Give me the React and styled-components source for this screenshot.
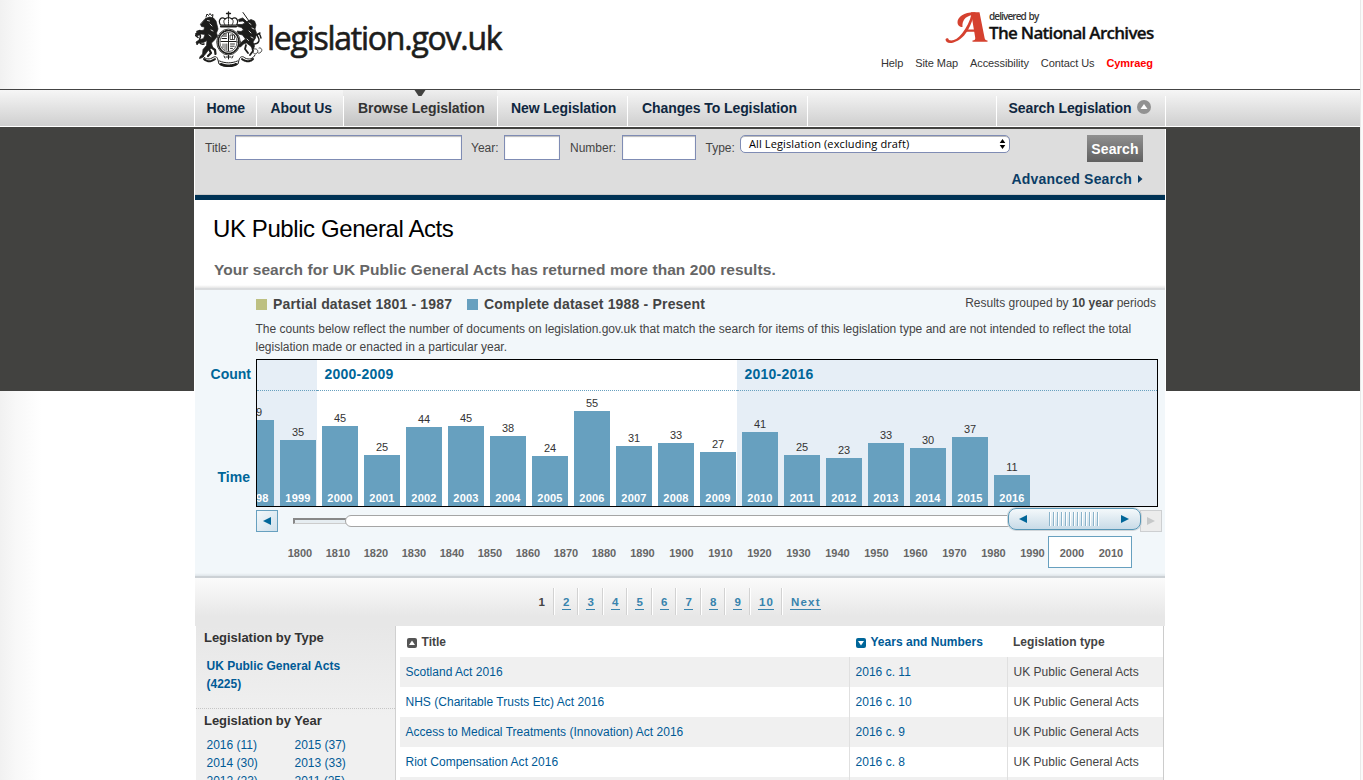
import React from "react";
import styled, { createGlobalStyle } from "styled-components";

const GlobalStyle = createGlobalStyle`
  *, *::before, *::after { box-sizing: border-box; }
  html, body { margin: 0; padding: 0; }
  body {
    width: 1363px; height: 780px; overflow: hidden; background: #fff;
    font-family: "Liberation Sans", Arial, sans-serif; font-size: 12px; color: #444;
  }
`;

const Page = styled.div`
  position: relative;
  width: 1363px;
  height: 780px;
  overflow: hidden;
  background:
    linear-gradient(#424240, #424240) 0 127px / 1360px 264px no-repeat,
    linear-gradient(90deg, #f1f1f1, #f8f8f8 16px, #fff 42px);
`;

const EdgeStrip = styled.div`
  position: absolute;
  top: 0;
  right: 0;
  width: 3px;
  height: 780px;
  background: #fafafa;
  border-left: 1px solid #e9e9e9;
`;

const Header = styled.header`
  display: flex;
  justify-content: space-between;
  width: 970px;
  height: 89px;
  margin: 0 auto 0 195px;
`;

const Brand = styled.div`
  display: flex;
  align-items: flex-start;
  padding-top: 11px;
`;

const BrandName = styled.span`
  margin: 7px 0 0 4px;
  font: 400 32px/40px "Open Sans", "Noto Sans", sans-serif;
  letter-spacing: -1.25px;
  color: #1d1d1b;
  -webkit-text-stroke: 0.6px #1d1d1b;
  white-space: nowrap;
`;

const HeaderSide = styled.div`
  display: flex;
  flex-direction: column;
  align-items: flex-end;
  padding: 11px 11px 0 0;
`;

const Archives = styled.div`
  display: flex;
  height: 34px;
`;

const ArchivesText = styled.div`
  display: flex;
  flex-direction: column;
  width: 165px;
  margin-left: 1px;
  font-family: "Open Sans", "Noto Sans", sans-serif;
  white-space: nowrap;
`;

const DeliveredBy = styled.span`
  font-size: 10px;
  font-weight: 600;
  line-height: 11px;
  letter-spacing: -0.9px;
  word-spacing: 1px;
  color: #333;
`;

const ArchivesName = styled.span`
  font-size: 17px;
  font-weight: 600;
  line-height: 21px;
  letter-spacing: -0.7px;
  color: #111;
  -webkit-text-stroke: 0.3px #111;
`;

const UtilityLinks = styled.nav`
  display: flex;
  gap: 12px;
  padding: 12px 1px 0 0;
  font-size: 11px;
  line-height: 13px;
  letter-spacing: -0.08px;
  color: #333;
`;

const Cymraeg = styled.b`
  color: #f00;
`;

const NavBar = styled.nav`
  position: relative;
  z-index: 1;
  display: flex;
  width: 1360px;
  height: 38px;
  padding: 0 194px;
  border-top: 1px solid #444;
  border-bottom: 1px solid #fff;
  background: linear-gradient(#f6f6f6, #cfcfcf);
  box-shadow: 0 2px 0 #424240;
`;

const NavItem = styled.a`
  position: relative;
  width: ${(p) => p.$w}px;
  margin-left: ${(p) => (p.$push ? "auto" : 0)};
  padding-left: ${(p) => p.$pad || 12.5}px;
  font-size: 14px;
  font-weight: bold;
  line-height: 36px;
  letter-spacing: -0.09px;
  color: ${(p) => (p.$active ? "#333" : "#0f2740")};
  white-space: nowrap;
  background: ${(p) => (p.$active ? "linear-gradient(#efefef, #c2c2c2)" : "none")};
  &::before {
    content: "";
    position: absolute;
    left: 0;
    top: 6px;
    bottom: 0;
    width: 1px;
    background: #fff;
  }
`;

const NavEnd = styled.span`
  width: 1px;
  margin-top: 6px;
  background: #fff;
`;

const NavPointer = styled.svg`
  position: absolute;
  top: 0;
  left: 71px;
`;

const SearchIcon = styled.svg`
  margin-left: 6px;
  vertical-align: -1px;
`;

const Main = styled.main`
  width: 972px;
  margin-left: 194px;
  border: solid #fff;
  border-width: 0 1px;
  background: #fff;
`;

const SearchPanel = styled.form`
  height: 68px;
  border-bottom: 1px solid #c9c9c9;
  padding: 8px 22px 0 10px;
  background: #ddd;
`;

const SearchRow = styled.div`
  display: flex;
  align-items: flex-start;
`;

const FieldLabel = styled.label`
  width: ${(p) => p.$w}px;
  padding-top: 6px;
  padding-left: ${(p) => p.$pad || 0}px;
  line-height: 15px;
  color: #444;
  white-space: nowrap;
`;

const TextField = styled.input`
  width: ${(p) => p.$w}px;
  height: 25px;
  border: 1px solid #7f8cb4;
  border-radius: 0;
  background: #fff;
  box-shadow: inset 0 1px 1px #bbb;
`;

const TypeSelect = styled.div`
  display: flex;
  justify-content: space-between;
  align-items: center;
  width: 270px;
  height: 18px;
  padding: 0 3px 0 8px;
  border: 1px solid #7f8cb4;
  border-radius: 5px;
  background: #fff;
  box-shadow: inset 0 1px 0 #bbb;
  font: 11px/16px "Open Sans", "Noto Sans", sans-serif;
  letter-spacing: 0.12px;
  color: #000;
`;

const SearchButton = styled.button`
  width: 56px;
  height: 27px;
  margin-left: auto;
  padding: 0;
  border: 0;
  background: linear-gradient(#909090, #606060);
  font: bold 14px/28px "Liberation Sans", Arial, sans-serif;
  letter-spacing: 0.1px;
  color: #fff;
`;

const AdvancedSearch = styled.a`
  display: flex;
  justify-content: flex-end;
  align-items: center;
  gap: 6px;
  margin-top: 9px;
  font-size: 14px;
  font-weight: bold;
  line-height: 16px;
  letter-spacing: 0.2px;
  color: #0b3d66;
`;

const Heading = styled.section`
  height: 93px;
  padding: 15px 0 0 18px;
  border-top: 5px solid #003355;
  background: linear-gradient(#fff, #e6e6e6) 0 100% / 100% 3px no-repeat;
`;

const PageTitle = styled.h1`
  margin: 0;
  font-size: 24px;
  font-weight: normal;
  line-height: 28px;
  letter-spacing: -0.41px;
  color: #000;
`;

const ResultCount = styled.h2`
  margin: 17px 0 0 1px;
  font-size: 15.5px;
  line-height: 19px;
  letter-spacing: 0.06px;
  color: #666;
`;

const Timeline = styled.section`
  height: 290px;
  padding-top: 6px;
  border-top: 2px solid #dadcde;
  border-bottom: 2px solid #ccd1d5;
  background: linear-gradient(#f2f7fa, #dfe5e9) 0 100% / 100% 3px no-repeat, #f2f7fa;
`;

const LegendRow = styled.div`
  display: flex;
  align-items: center;
  height: 16px;
  padding: 0 9px 0 61px;
  white-space: nowrap;
`;

const LegendItem = styled.div`
  display: flex;
  align-items: center;
  gap: 6px;
  width: ${(p) => p.$w}px;
  font-size: 14px;
  font-weight: bold;
  letter-spacing: 0.18px;
  color: #444;
`;

const Swatch = styled.span`
  width: 11px;
  height: 11px;
  background: ${(p) => p.$color};
`;

const GroupNote = styled.span`
  margin: -2px 0 0 auto;
  color: #444;
`;

const Explanation = styled.p`
  width: 895px;
  margin: 8px 0 3px 60.5px;
  line-height: 18px;
  color: #444;
`;

const ChartRow = styled.div`
  display: flex;
`;

const AxisLabels = styled.div`
  display: flex;
  flex-direction: column;
  align-items: flex-end;
  justify-content: space-between;
  width: 61px;
  height: 148px;
  padding: 6px 5px 21px 0;
  font-size: 14px;
  font-weight: bold;
  line-height: 18px;
  color: #069;
`;

const TimeLabel = styled.span`
  margin-right: 1px;
`;

const ChartFrame = styled.div`
  display: flex;
  width: 902px;
  height: 148px;
  border: 1px solid #000;
  background: #e6eef6;
  overflow: hidden;
`;

const Decade = styled.div`
  display: flex;
  flex-direction: column;
  align-items: ${(p) => (p.$end ? "flex-end" : "stretch")};
  width: ${(p) => p.$w}px;
  background: ${(p) => (p.$shaded ? "#e6eef6" : "#fff")};
  overflow: hidden;
`;

const DecadeLabel = styled.div`
  flex: none;
  align-self: stretch;
  height: 31px;
  padding-left: 7.5px;
  border-bottom: 1px dotted #67a0bf;
  font-size: 14px;
  font-weight: bold;
  line-height: 28px;
  letter-spacing: 0.22px;
  color: #069;
`;

const Bars = styled.div`
  display: flex;
  align-items: flex-end;
  gap: 6px;
  flex: 1;
  padding: 0 1px 0 5px;
`;

const BarColumn = styled.div`
  flex: none;
  display: flex;
  flex-direction: column;
  width: 36px;
  font-size: 11px;
  line-height: 14px;
  text-align: center;
  color: #333;
`;

const Bar = styled.div`
  display: flex;
  align-items: flex-end;
  justify-content: center;
  margin-top: 1px;
  padding-bottom: 1px;
  background: #67a0bf;
  font-weight: bold;
  letter-spacing: 0.2px;
  color: #fff;
`;

const SliderRow = styled.div`
  display: flex;
  height: 27px;
  padding: 1px 0 0 61px;
`;

const StepButton = styled.span`
  display: flex;
  align-items: center;
  justify-content: center;
  width: 22px;
  height: 22px;
  margin-top: 2px;
  margin-left: ${(p) => (p.$disabled ? "-1px" : 0)};
  border: ${(p) => (p.$disabled ? "1px solid #cdcfd1" : "1px solid #67a0bf")};
  background: ${(p) => (p.$disabled ? "#ececec" : "linear-gradient(135deg, #f2f7fa, #cfe0eb)")};
`;

const Track = styled.span`
  width: 53px;
  height: 6px;
  margin: 10px 0 0 15px;
  border: solid #888;
  border-width: 2px 0 1px 2px;
  border-bottom-color: #ccc;
  background: #e6edf1;
`;

const Range = styled.span`
  width: 668px;
  height: 12px;
  margin: 7px 0 0 -1px;
  border: 1px solid #a5a5a5;
  border-radius: 6px;
  background: #fff;
`;

const Handle = styled.span`
  z-index: 1;
  display: flex;
  align-items: center;
  justify-content: space-between;
  width: 133px;
  height: 22px;
  margin-left: -5px;
  padding: 0 10px 0 9px;
  border: 1px solid #5696b6;
  border-radius: 8px;
  background: linear-gradient(#f4f9fb, #c8dbe7);
  box-shadow: 0 0 0 1px #cfd5d9;
`;

const Grip = styled.span`
  width: 50px;
  height: 14px;
  margin: -1px 0 0;
  background: repeating-linear-gradient(90deg, #8ab3ca 0 1px, #fff 1px 2px, transparent 2px 4px);
`;

const Years = styled.div`
  display: flex;
  height: 32px;
  margin-top: 2px;
  padding-left: 86px;
  font-size: 11px;
  font-weight: bold;
  line-height: 34px;
  text-align: center;
  color: #666;
`;

const YearMark = styled.span`
  width: ${(p) => p.$w}px;
`;

const SelectedYears = styled.span`
  display: flex;
  width: 84px;
  margin-left: -4px;
  padding-left: 3.5px;
  border: 1px solid #67a0bf;
  line-height: 32px;
  background: #fff;
`;

const Pagination = styled.nav`
  display: flex;
  justify-content: center;
  height: 48px;
  padding: 10px 2px 0 0;
  background: linear-gradient(#fbfbfb, #e7e7e7 80%);
`;

const PageStep = styled.span`
  height: 27px;
  padding: 7px 6.9px 0 8px;
  border-left: ${(p) => (p.$first ? 0 : "1px solid #d2d2d2")};
  box-shadow: ${(p) => (p.$first ? "none" : "inset 1px 0 #fff")};
  font-size: 11.5px;
  font-weight: bold;
  line-height: 14px;
  letter-spacing: 1.2px;
  color: #444;
`;

const PageLink = styled.a`
  display: block;
  padding-left: 1px;
  border-bottom: 1px solid #3883ad;
  color: #3883ad;
`;

const Results = styled.section`
  display: flex;
  height: 154px;
  padding: 0 1px;
  overflow: hidden;
`;

const Sidebar = styled.aside`
  width: 200px;
  border-right: 1px solid #d0d0d0;
  background: linear-gradient(#e7e7e7, #f0f0f0 90px);
`;

const FacetTitle = styled.h3`
  margin: 0;
  font-size: 13px;
  line-height: 16px;
  letter-spacing: -0.03px;
  color: #333;
`;

const FacetByType = styled.div`
  height: 83px;
  padding: 4px 0 0 8px;
  border-bottom: 1px dotted #c5c5c5;
`;

const FacetByYear = styled.div`
  padding: 4px 0 0 8px;
`;

const TypeLink = styled.a`
  display: block;
  width: 150px;
  margin: 11px 0 0 2.5px;
  font-weight: bold;
  line-height: 18px;
  color: #005a96;
`;

const YearLinks = styled.div`
  display: grid;
  grid-template-columns: 88px 88px;
  margin: 7px 0 0 2.5px;
  line-height: 18px;
  color: #005a96;
`;

const Table = styled.div`
  width: 764px;
  margin-left: 4px;
  border-right: 1px solid #ccc;
`;

const Row = styled.div`
  display: grid;
  grid-template-columns: 449px 158px 156px;
  height: ${(p) => (p.$head ? 31 : 30)}px;
  line-height: ${(p) => (p.$head ? 32 : 30)}px;
  font-weight: ${(p) => (p.$head ? "bold" : "normal")};
  background: ${(p) => (p.$shaded ? "#f0f0f0" : "#fff")};
`;

const Cell = styled.div`
  display: flex;
  align-items: center;
  padding-left: ${(p) => p.$pad || 5.5}px;
  border-left: ${(p) => (p.$line ? "1px solid #e0e0e0" : 0)};
  color: ${(p) => (p.$link ? "#005a96" : "#444")};
  letter-spacing: 0.02px;
  white-space: nowrap;
`;

const SortMark = styled.svg`
  margin: 2px 4.5px 0 0;
`;

const decades = [
  { w: 60, end: true, shaded: true, label: "", bars: [[1998, 49, 86], [1999, 35, 66]] },
  {
    w: 420, label: "2000-2009",
    bars: [[2000, 45, 80], [2001, 25, 51], [2002, 44, 79], [2003, 45, 80], [2004, 38, 70],
      [2005, 24, 50], [2006, 55, 95], [2007, 31, 60], [2008, 33, 63], [2009, 27, 54]],
  },
  {
    w: 420, shaded: true, label: "2010-2016",
    bars: [[2010, 41, 74], [2011, 25, 51], [2012, 23, 48], [2013, 33, 63], [2014, 30, 58],
      [2015, 37, 69], [2016, 11, 31]],
  },
];

const yearMarks = Array.from({ length: 20 }, (_, i) => 1800 + i * 10);

const acts = [
  ["Scotland Act 2016", "2016 c. 11"],
  ["NHS (Charitable Trusts Etc) Act 2016", "2016 c. 10"],
  ["Access to Medical Treatments (Innovation) Act 2016", "2016 c. 9"],
  ["Riot Compensation Act 2016", "2016 c. 8"],
  ["", ""],
];

const Arrow = ({ left, color = "#069" }) => (
  <svg width="10" height="10" viewBox="0 0 10 10">
    <path d={left ? "M9 1v8L1 5z" : "M1 1v8l8-4z"} fill={color} />
  </svg>
);

const Crest = () => (
  <svg width="68" height="57" viewBox="0 0 68 57" fill="none" stroke="#1d1d1b" strokeLinecap="round" strokeLinejoin="round">
    {/* crown */}
    <path d="M33.500 1v5M31.500 2.500h4" strokeWidth="1.300" />
    <path d="M25.500 14c-3-5 1-9 4.500-6 2-2 5-2 7 0 3.500-3 7.500 1 4.500 6z" strokeWidth="1.200" />
    <path d="M30 8c-2 2-1 4 0 6M37 8c2 2 1 4 0 6M33.500 7v7" strokeWidth=".9" strokeDasharray="1.200 .8" />
    <path d="M26 15.500h15" strokeWidth="2.200" strokeDasharray="2 .6" />
    {/* garter and shield */}
    <ellipse cx="33.500" cy="31" rx="11.800" ry="13" strokeWidth=".8" />
    <ellipse cx="33.500" cy="31" rx="10.300" ry="11.500" strokeWidth="1.700" strokeDasharray=".9 1" />
    <ellipse cx="33.500" cy="31" rx="8.600" ry="9.600" strokeWidth=".7" />
    <path d="M33.500 22v18M26 30.500h15" strokeWidth="1" />
    <path d="M27.500 25h4M27 27.500h4.500M28.500 23h3" strokeWidth="1" />
    <path d="M35.500 24h4v4.500h-4zM37.500 24v4" strokeWidth=".8" />
    <path d="M28 33v4M30 33v5.500M31.800 33v6" strokeWidth=".8" />
    <path d="M35.500 33h4M35.500 35.200h3.700M35.500 37.400h2" strokeWidth=".9" />
    {/* lion */}
    <path d="M11 6l1-3 1.500 1.500L15 2.500l1.500 2L18 3.500l-.5 3" strokeWidth="1" />
    <path d="M10.500 7.500l4-1.500 4 1 2.500 3 1 4 1 4-1.500 4 1 3-3 4-3 3 1 4-4 3-3 4-3 3.500-3 1 .5-2 2.500-2 .5-5 3.500-4 .5-5-3.500 2-5 .5-1.500 2-1-3 3-2 4.500-1.500 1.500-4-4-.5-4 2-1.500-2.500 3.500-2.500 5-1 .5-3-3-.5-1-2z" fill="#1d1d1b" strokeWidth=".7" />
    <path d="M12.500 9.500l2 .5M15 13l2 2M16 19l2 1M14 24l2 1.500" stroke="#fff" strokeWidth=".8" />
    <path d="M16 36l4 3 .5 4M14 38l2 4-3 3" strokeWidth="2.200" />
    <path d="M9 33c-5 1-5-3-4-6 1-2 0-5-3-4.500M2 22.500l-1.500 2 2.500 2M5 19.500l-3 1" strokeWidth="1.500" />
    {/* unicorn */}
    <path d="M54 10l-6-8.500" strokeWidth="1" />
    <path d="M52 10.500l4-2 3.500 1.500 1.500 4-1 4 1.500 4-1 5-2.500 4 1.500 4-1 3-3-3-4-3-3 1-3 3-2-1 3-4 4-3-3-4-4-1-1.500-3 4 .5 2.500-1.500-2-2.500-4-1-.5-2 5 0 3-1.500-2-2-4 .5-.5-2 4-1.500z" fill="#1d1d1b" strokeWidth=".7" />
    <path d="M54 12l2 1.500M57 17l2 1M54 20l2 2M56 26l2 1M52 28l1.500 1.500" stroke="#fff" strokeWidth=".8" />
    <path d="M51 34l-1 4 3 4M57 35l1 5-3 4" strokeWidth="1.800" />
    <path d="M59 33c5 0 6-4 4-7-2-3 1-4 2-2l1 3M61 24l4-2" strokeWidth="1.400" />
    <path d="M59 38c3-1 5 2 3 4s-5 0-4-2M64 37c2-1 4 2 2 4s-3 1-3 1" strokeWidth=".8" />
    {/* motto ribbon */}
    <path d="M7 44c3 4 6 5 10 3 3-2 5-2 6 2l1 4c6 3 13 3 19 0l1-4c1-4 4-4 6-2 4 2 8 1 10-3" strokeWidth="1" />
    <path d="M9 48c3 3 7 3 11 0M47 48c4 3 8 3 11 0" strokeWidth="2" strokeDasharray="1.300 1" />
    <path d="M24.500 50c6 2.500 12 2.500 18 0" strokeWidth="1" />
    <path d="M26 53.300c5 2 10 2 15 0" strokeWidth="2.600" strokeDasharray="1.700 .8" />
    <path d="M33.500 44v4M31 46h5M29 45l1 2M38 45l-1 2" strokeWidth="1" />
  </svg>
);

const ArchivesMark = () => (
  <svg width="43" height="34" viewBox="0 0 43 34" fill="#d5412f">
    <path d="M26 1.200h8.500L39.500 26.500c.5 2.300 1 2.800 3 3v1.300H27.500v-1.300c2.300-.2 3-.8 2.700-3z" />
    <path d="M31 1.200C20 .5 12.500 5.500 12.500 11c0 3.500 2 5 5 5 -.5-6 2.500-10.500 9.500-12z" />
    <path d="M26.500 3c-1.500 7-5 14-9.500 19.500C12.500 28 8 30.500 3.800 29c.2-2-2.500-2.500-3.300-.7C.5 31.500 4 33 8.500 31.500 15 29.500 20.500 24 23.500 18c2.500-4.500 4.500-10 5.200-14z" />
    <path d="M21 18.500h11v2.200H20z" />
  </svg>
);

export default function App() {
  return (
    <Page>
      <GlobalStyle />
      <Header>
        <Brand>
          <Crest />
          <BrandName>legislation.gov.uk</BrandName>
        </Brand>
        <HeaderSide>
          <Archives>
            <ArchivesMark />
            <ArchivesText>
              <DeliveredBy>delivered by</DeliveredBy>
              <ArchivesName>The National Archives</ArchivesName>
            </ArchivesText>
          </Archives>
          <UtilityLinks>
            <span>Help</span>
            <span>Site Map</span>
            <span>Accessibility</span>
            <span>Contact Us</span>
            <Cymraeg>Cymraeg</Cymraeg>
          </UtilityLinks>
        </HeaderSide>
      </Header>

      <NavBar>
        <NavItem $w={62}>Home</NavItem>
        <NavItem $w={87} $pad={14.5}>About Us</NavItem>
        <NavItem $w={154} $pad={15} $active>
          Browse Legislation
          <NavPointer width="12" height="7" viewBox="0 0 12 7">
            <path d="M.5 0h11L7.500 6h-3z" fill="#424240" />
          </NavPointer>
        </NavItem>
        <NavItem $w={130} $pad={14}>New Legislation</NavItem>
        <NavItem $w={180} $pad={15}>Changes To Legislation</NavItem>
        <NavEnd />
        <NavItem $w={169} $push>
          Search Legislation
          <SearchIcon width="14" height="14" viewBox="0 0 14 14">
            <circle cx="7" cy="7" r="7" fill="#929292" />
            <path d="M7 4l3.500 5h-7z" fill="#fff" />
          </SearchIcon>
        </NavItem>
        <NavEnd />
      </NavBar>

      <Main>
        <SearchPanel>
          <SearchRow>
            <FieldLabel $w={30}>Title:</FieldLabel>
            <TextField $w={227} />
            <FieldLabel $w={42} $pad={9}>Year:</FieldLabel>
            <TextField $w={56} />
            <FieldLabel $w={62} $pad={10}>Number:</FieldLabel>
            <TextField $w={74} />
            <FieldLabel $w={44} $pad={9.5}>Type:</FieldLabel>
            <TypeSelect>
              All Legislation (excluding draft)
              <svg width="7" height="12" viewBox="0 0 7 12">
                <path d="M3.500 1l2.800 4H.7zM3.500 11L.7 7h5.600z" fill="#000" />
              </svg>
            </TypeSelect>
            <SearchButton type="button">Search</SearchButton>
          </SearchRow>
          <AdvancedSearch>
            Advanced Search
            <svg width="5" height="8" viewBox="0 0 5 8">
              <path d="M0 0l4.500 4L0 8z" fill="#0b3d66" />
            </svg>
          </AdvancedSearch>
        </SearchPanel>

        <Heading>
          <PageTitle>UK Public General Acts</PageTitle>
          <ResultCount>Your search for UK Public General Acts has returned more than 200 results.</ResultCount>
        </Heading>

        <Timeline>
          <LegendRow>
            <LegendItem $w={211}><Swatch $color="#bdc082" />Partial dataset 1801 - 1987</LegendItem>
            <LegendItem><Swatch $color="#67a0bf" />Complete dataset 1988 - Present</LegendItem>
            <GroupNote>Results grouped by <b>10 year</b> periods</GroupNote>
          </LegendRow>
          <Explanation>
            The counts below reflect the number of documents on legislation.gov.uk that match the search for items of this legislation type and are not intended to reflect the total legislation made or enacted in a particular year.
          </Explanation>
          <ChartRow>
            <AxisLabels><span>Count</span><TimeLabel>Time</TimeLabel></AxisLabels>
            <ChartFrame>
              {decades.map((d) => (
                <Decade key={d.w + d.label} $w={d.w} $end={d.end} $shaded={d.shaded}>
                  <DecadeLabel>{d.label}</DecadeLabel>
                  <Bars>
                    {d.bars.map(([year, count, height]) => (
                      <BarColumn key={year}>
                        {count}
                        <Bar style={{ height }}>{year}</Bar>
                      </BarColumn>
                    ))}
                  </Bars>
                </Decade>
              ))}
            </ChartFrame>
          </ChartRow>
          <SliderRow>
            <StepButton><Arrow left /></StepButton>
            <Track />
            <Range />
            <Handle><Arrow left /><Grip /><Arrow /></Handle>
            <StepButton $disabled><Arrow color="#c6c8c9" /></StepButton>
          </SliderRow>
          <Years>
            {yearMarks.map((y) => (
              <YearMark key={y} $w={y < 1890 ? 38 : 39}>{y}</YearMark>
            ))}
            <SelectedYears>
              <YearMark $w={39}>2000</YearMark>
              <YearMark $w={39}>2010</YearMark>
            </SelectedYears>
          </Years>
        </Timeline>

        <Pagination>
          <PageStep $first>1</PageStep>
          {["2", "3", "4", "5", "6", "7", "8", "9", "10", "Next"].map((p) => (
            <PageStep key={p}><PageLink>{p}</PageLink></PageStep>
          ))}
        </Pagination>

        <Results>
          <Sidebar>
            <FacetByType>
              <FacetTitle>Legislation by Type</FacetTitle>
              <TypeLink>UK Public General Acts (4225)</TypeLink>
            </FacetByType>
            <FacetByYear>
              <FacetTitle>Legislation by Year</FacetTitle>
              <YearLinks>
                <span>2016 (11)</span><span>2015 (37)</span>
                <span>2014 (30)</span><span>2013 (33)</span>
                <span>2012 (23)</span><span>2011 (25)</span>
              </YearLinks>
            </FacetByYear>
          </Sidebar>
          <Table>
            <Row $head>
              <Cell $pad={7}>
                <SortMark width="10" height="10" viewBox="0 0 10 10">
                  <rect width="10" height="10" rx="2" fill="#555" />
                  <path d="M5 2.500L8 7H2z" fill="#fff" />
                </SortMark>
                Title
              </Cell>
              <Cell $pad={7} $link>
                <SortMark width="10" height="10" viewBox="0 0 10 10">
                  <rect width="10" height="10" rx="2" fill="#069" />
                  <path d="M5 7.500L8 3H2z" fill="#fff" />
                </SortMark>
                Years and Numbers
              </Cell>
              <Cell $pad={6}>Legislation type</Cell>
            </Row>
            {acts.map(([title, number], i) => (
              <Row key={i} $shaded={i % 2 === 0}>
                <Cell $link>{title}</Cell>
                <Cell $link $line>{number}</Cell>
                <Cell $line>{title && "UK Public General Acts"}</Cell>
              </Row>
            ))}
          </Table>
        </Results>
      </Main>
      <EdgeStrip />
    </Page>
  );
}
